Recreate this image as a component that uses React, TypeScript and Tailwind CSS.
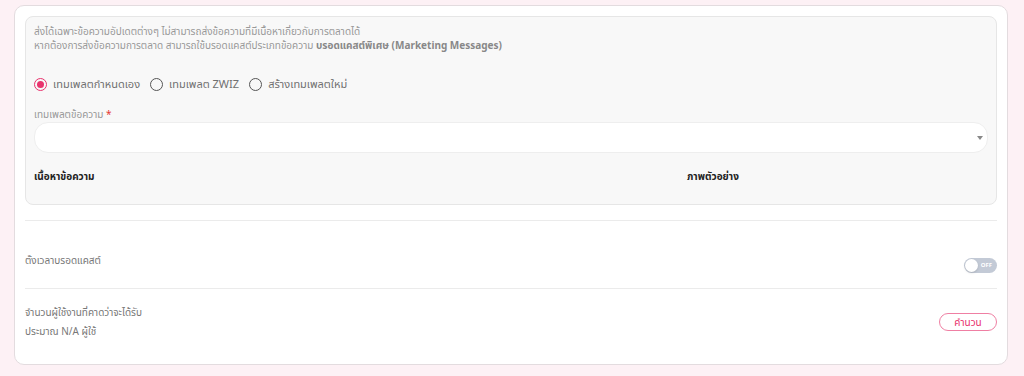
import React, {useState} from 'react';

const options = ['เทมเพลตกำหนดเอง', 'เทมเพลต ZWIZ', 'สร้างเทมเพลตใหม่'];

const Radio: React.FC<{checked: boolean; label: string; onClick: () => void}> = ({checked, label, onClick}) => (
    <label onClick={onClick} className="flex items-center gap-[6px] cursor-pointer mr-[10px] h-[14px]">
        <span
            className={checked
                ? "w-[13px] h-[13px] rounded-full border-[1.5px] border-[#e8336d] flex items-center justify-center"
                : "w-[13px] h-[13px] rounded-full border-[1.5px] border-[#555] flex items-center justify-center"}>
            {checked && <span className="w-[7px] h-[7px] rounded-full bg-[#e8336d]"/>}
        </span>
        <span className="text-[11px] leading-[14px] text-[#707070]">{label}</span>
    </label>
);

const App: React.FC = () => {
    const [selected, setSelected] = useState(0);
    const [scheduled, setScheduled] = useState(false);

    return (
        <div className="w-[1024px] h-[376px] bg-[#fdf1f5] pt-[5px] pl-[14px] pr-[16px] font-['Noto_Sans','Noto_Sans_Thai',sans-serif]">
            <div className="bg-white border border-[#e3dcdf] rounded-[10px] px-[10px] pt-[10px] pb-[23px]">
                <div className="bg-[#f8f8f8] border border-[#e6e6e6] rounded-[8px] px-[8px] pt-[7px] pb-[21px]">
                    <p className="text-[10px] leading-[14px] text-[#999]">
                        ส่งได้เฉพาะข้อความอัปเดตต่างๆ ไม่สามารถส่งข้อความที่มีเนื้อหาเกี่ยวกับการตลาดได้
                    </p>
                    <p className="text-[10px] leading-[14px] text-[#999]">
                        หากต้องการส่งข้อความการตลาด สามารถใช้บรอดแคสต์ประเภทข้อความ <span className="font-bold text-[#888]">บรอดแคสต์พิเศษ (Marketing Messages)</span>
                    </p>

                    <div className="flex items-center mt-[25px] h-[14px]">
                        {options.map((opt, i) => (
                            <Radio key={opt} label={opt} checked={selected === i} onClick={() => setSelected(i)}/>
                        ))}
                    </div>

                    <div className="mt-[16px] text-[10px] leading-[14px] text-[#999]">
                        เทมเพลตข้อความ <span className="text-[#e53935]">*</span>
                    </div>
                    <div className="mt-[1px] h-[31px] bg-white border border-[#eeeeee] rounded-[14px] flex items-center justify-end pr-[4px]">
                        <span className="w-0 h-0 border-l-[3px] border-r-[3px] border-t-[4px] border-l-transparent border-r-transparent border-t-[#888]"/>
                    </div>

                    <div className="grid grid-cols-[653px_1fr] mt-[16px] text-[10px] leading-[14px] font-bold text-[#222]">
                        <div>เนื้อหาข้อความ</div>
                        <div>ภาพตัวอย่าง</div>
                    </div>
                </div>

                <div className="border-t border-[#ebebeb] mt-[15px]"/>

                <div className="flex items-start justify-between h-[67px]">
                    <span className="text-[10px] leading-[14px] text-[#777] mt-[32px]">ตั้งเวลาบรอดแคสต์</span>
                    <button
                        onClick={() => setScheduled(!scheduled)}
                        className="mt-[37px] w-[33px] h-[15px] rounded-full bg-[#c3cad6] flex items-center px-[1px] relative">
                        <span className="w-[13px] h-[13px] rounded-full bg-white shadow-sm"/>
                        <span className="absolute right-[5px] text-[6px] font-bold text-white">OFF</span>
                    </button>
                </div>

                <div className="border-t border-[#ebebeb]"/>

                <div className="flex items-center justify-between pt-[14px]">
                    <div className="text-[10px] text-[#777]">
                        <div className="leading-[19px]">จำนวนผู้ใช้งานที่คาดว่าจะได้รับ</div>
                        <div className="leading-[19px]">ประมาณ N/A ผู้ใช้</div>
                    </div>
                    <button className="w-[58px] h-[18px] rounded-full border border-[#ef7fa3] text-[10px] leading-[14px] text-[#e8336d] flex items-center justify-center">
                        คำนวน
                    </button>
                </div>
            </div>
        </div>
    );
};

export default App;
